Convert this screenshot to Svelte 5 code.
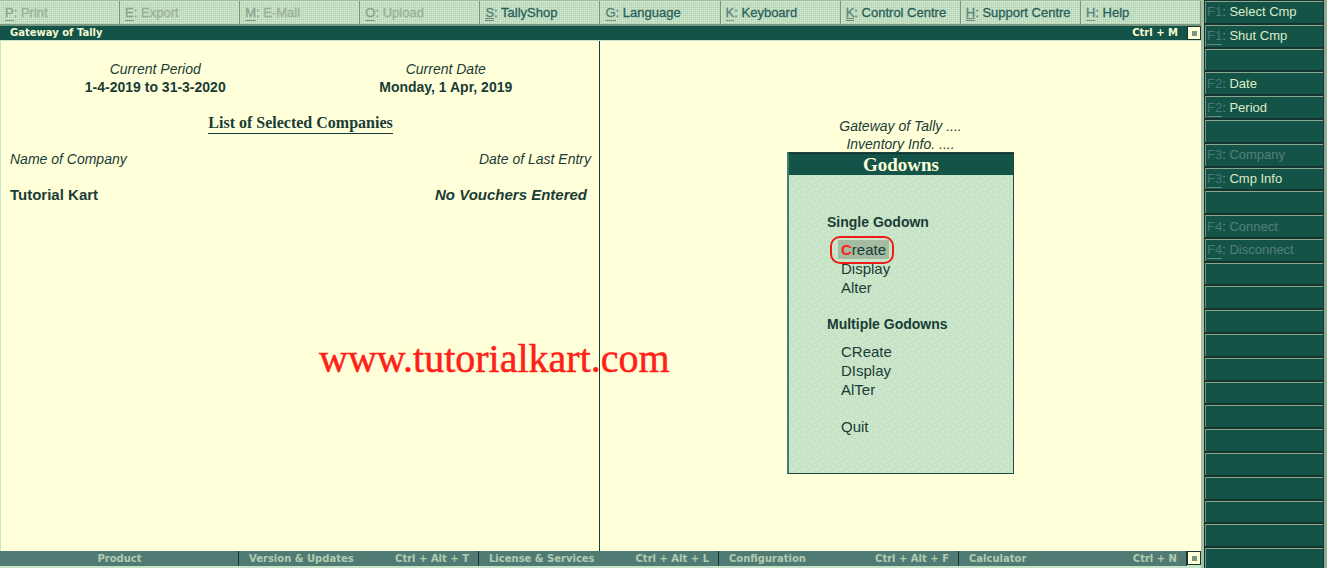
<script>
  const tools = [
    { key: 'P', label: 'Print', off: true },
    { key: 'E', label: 'Export', off: true },
    { key: 'M', label: 'E-Mail', off: true },
    { key: 'O', label: 'Upload', off: true },
    { key: 'S', label: 'TallyShop', double: true },
    { key: 'G', label: 'Language' },
    { key: 'K', label: 'Keyboard' },
    { key: 'K', label: 'Control Centre', double: true },
    { key: 'H', label: 'Support Centre', double: true },
    { key: 'H', label: 'Help' }
  ];

  const commands = [
    { key: 'F1', label: 'Select Cmp' },
    { key: 'F1', label: 'Shut Cmp', alt: true },
    null,
    { key: 'F2', label: 'Date' },
    { key: 'F2', label: 'Period', alt: true },
    null,
    { key: 'F3', label: 'Company', off: true },
    { key: 'F3', label: 'Cmp Info', alt: true },
    null,
    { key: 'F4', label: 'Connect', off: true },
    { key: 'F4', label: 'Disconnect', off: true, alt: true },
    ...Array(13).fill(null)
  ];

  const panels = [
    { label: 'Product' },
    { label: 'Version & Updates', hint: 'Ctrl + Alt + T' },
    { label: 'License & Services', hint: 'Ctrl + Alt + L' },
    { label: 'Configuration', hint: 'Ctrl + Alt + F' },
    { label: 'Calculator', hint: 'Ctrl + N' }
  ];
</script>

<div class="app">
  <div class="main">
    <nav class="toolbar">
      {#each tools as t}
        <button class="tool" class:off={t.off} disabled={t.off}>
          <span class="key" class:double={t.double}>{t.key}</span><span class="colon">:</span> {t.label}
        </button>
      {/each}
    </nav>

    <header class="titlebar">
      <span>Gateway of Tally</span>
      <span class="hint">Ctrl + M</span>
      <button class="box" aria-label="Restore main area"></button>
    </header>

    <div class="work">
      <section class="companies">
        <div class="facts">
          <div><i>Current Period</i><b>1-4-2019 to 31-3-2020</b></div>
          <div><i>Current Date</i><b>Monday, 1 Apr, 2019</b></div>
        </div>
        <h2>List of Selected Companies</h2>
        <table>
          <thead>
            <tr><th>Name of Company</th><th>Date of Last Entry</th></tr>
          </thead>
          <tbody>
            <tr><td>Tutorial Kart</td><td><em>No Vouchers Entered</em></td></tr>
          </tbody>
        </table>
      </section>

      <section class="gateway">
        <div class="trail"><span>Gateway of Tally ....</span><span>Inventory Info. ....</span></div>
        <div class="menu">
          <h1>Godowns</h1>
          <div class="entries">
            <h3>Single Godown</h3>
            <ul>
              <li><button class="item current"><b>C</b>reate</button></li>
              <li><button class="item">Display</button></li>
              <li><button class="item">Alter</button></li>
            </ul>
            <h3>Multiple Godowns</h3>
            <ul>
              <li><button class="item">CReate</button></li>
              <li><button class="item">DIsplay</button></li>
              <li><button class="item">AlTer</button></li>
              <li class="quit"><button class="item">Quit</button></li>
            </ul>
          </div>
        </div>
      </section>
      <div class="watermark">www.tutorialkart.com</div>
    </div>

    <footer>
      {#each panels as p}
        <div class="panel" class:single={!p.hint}>
          <span>{p.label}</span>
          {#if p.hint}<span>{p.hint}</span>{/if}
        </div>
      {/each}
      <button class="box" aria-label="Restore calculator"></button>
    </footer>
  </div>

  <aside>
    <div class="commands">
      {#each commands as c}
        {#if c}
          <button class="cmd" class:off={c.off} disabled={c.off}>
            <span class="fkey" class:alt={c.alt}>{c.key}</span><span class="colon">:</span> {c.label}
          </button>
        {:else}
          <div class="cmd"></div>
        {/if}
      {/each}
    </div>
  </aside>
</div>

<style>
  :global(body) {
    margin: 0;
    background: #ffffda;
  }
  * {
    box-sizing: border-box;
  }
  button {
    margin: 0;
    padding: 0;
    border: 0;
    background: none;
    color: inherit;
    font: inherit;
    text-align: left;
    white-space: pre;
  }
  h1, h2, h3, ul {
    margin: 0;
    padding: 0;
  }
  ul {
    list-style: none;
  }

  .app {
    display: grid;
    grid-template-columns: minmax(0, 1fr) 126px;
    height: 100vh;
    overflow: hidden;
    color: #1a3c36;
    font-family: "Liberation Sans", Arial, sans-serif;
  }
  .main {
    display: flex;
    flex-direction: column;
    background: #c8e4c8;
  }

  .toolbar {
    display: grid;
    grid-template-columns: repeat(10, 1fr);
    height: 26px;
    border-top: 1px solid #a7bda5;
    border-bottom: 2px solid #78957f;
    background: conic-gradient(#b2caae 25%, #c8e4c8 0) 0 0 / 2px 2px;
  }
  .tool {
    padding-left: 5px;
    border-right: 1px solid #76957f;
    box-shadow: inset 1px 2px #c8e4c8;
    color: #2a605a;
    font-size: 13px;
    line-height: 23px;
    -webkit-text-stroke: 0.3px currentColor;
  }
  .tool.off {
    color: #9bb09a;
  }
  .key {
    display: inline-block;
    height: 20px;
    border-bottom: 1px solid #7d9a87;
    line-height: 23px;
    color: #56817a;
  }
  .key.double {
    border-bottom: 3px double #6d8c7e;
  }
  .tool .colon {
    color: #56817a;
  }
  .off .key, .off .colon {
    color: #8ba38c;
  }

  .titlebar {
    display: flex;
    align-items: center;
    height: 14px;
    padding-left: 10px;
    background: #145448;
    color: #f4f8d4;
    font: bold 10px/14px "DejaVu Sans", Verdana, sans-serif;
  }
  .hint {
    margin-left: auto;
    margin-right: 9px;
  }
  .box {
    display: grid;
    place-items: center;
    width: 14px;
    height: 14px;
    border: 1px solid #17332d;
    background: #ffffda;
  }
  .box::before {
    content: "";
    width: 5px;
    height: 5px;
    background: #78957f;
  }

  .work {
    position: relative;
    flex: 1;
    display: grid;
    grid-template-columns: 599fr 601fr;
    min-height: 0;
    border-left: 1px solid #c8e4c8;
    border-top: 1px solid #c8e4c8;
    background: #ffffda;
  }
  .companies {
    padding: 19px 8px 0 9px;
    border-right: 1px solid #173f36;
  }
  .facts {
    display: grid;
    grid-template-columns: 1fr 1fr;
    font-size: 14px;
    line-height: 18px;
    text-align: center;
  }
  .facts i, .facts b {
    display: block;
  }
  h2 {
    width: fit-content;
    margin: 17px auto 0;
    padding-bottom: 1px;
    border-bottom: 1px solid #1a3c36;
    font: bold 16px/19px "Liberation Serif", "Times New Roman", serif;
  }
  table {
    width: 100%;
    margin-top: 16px;
    border-collapse: collapse;
  }
  th, td {
    padding: 0;
    text-align: left;
    line-height: 18px;
  }
  th {
    font-size: 14px;
    font-style: italic;
    font-weight: normal;
  }
  td {
    padding-top: 18px;
    font-size: 15px;
    font-weight: bold;
  }
  th:last-child, td:last-child {
    text-align: right;
  }
  td:last-child {
    padding-right: 4px;
  }

  .gateway {
    display: flex;
    flex-direction: column;
    align-items: center;
    padding-top: 76px;
  }
  .trail {
    display: grid;
    justify-items: center;
    font-size: 14px;
    font-style: italic;
    line-height: 18px;
    text-align: center;
  }
  .menu {
    width: 227px;
    min-height: 322px;
    border: 1px solid #1a4a41;
    border-left: 2px solid #477a70;
    margin-top: -1px;
    background:
      conic-gradient(#eff6d1 25%, transparent 0) 0 0 / 2px 2px no-repeat,
      linear-gradient(#eff6d1, #eff6d1) 0 0 / 0 0,
      url("data:image/svg+xml,%3Csvg xmlns='http://www.w3.org/2000/svg' width='12' height='10'%3E%3Cpath fill='%23eff6d1' d='M1 1h1v1h-1zM7 3h1v1h-1zM3 6h1v1h-1zM10 8h1v1h-1z'/%3E%3C/svg%3E"),
      #c8e4c8;
  }
  h1 {
    border-top: 1px solid #17332d;
    background: #145448;
    color: #ffffda;
    font: bold 19px/21px "Liberation Serif", "Times New Roman", serif;
    text-align: center;
  }
  .entries {
    padding: 38px 0 36px 38px;
  }
  h3 {
    font-size: 14px;
    line-height: 18px;
  }
  ul {
    padding: 9px 0 0 11px;
  }
  li {
    height: 19px;
  }
  ul + h3 {
    margin-top: 18px;
  }
  .quit {
    margin-top: 18px;
  }
  .item {
    position: relative;
    display: block;
    padding: 0 3px;
    font-size: 15px;
    line-height: 19px;
  }
  .current {
    background: #a5bba2;
  }
  .current b {
    color: #ff2018;
  }
  .current::after {
    content: "";
    position: absolute;
    z-index: 1;
    inset: -4px -5px -5px -8px;
    border: 2px solid #ee1c14;
    border-radius: 10px;
  }
  .watermark {
    position: absolute;
    top: 294px;
    left: 26.5%;
    color: #ff2018;
    font: 40px/48px "Liberation Serif", "Times New Roman", serif;
    -webkit-text-stroke: 0.5px currentColor;
  }

  footer {
    display: grid;
    grid-template-columns: 239fr 240fr 240fr 240fr 228fr 14px;
    height: 17px;
    padding-bottom: 2px;
    color: #b2cbb0;
    font: bold 10px/15px "DejaVu Sans", Verdana, sans-serif;
    white-space: nowrap;
  }
  .panel {
    display: flex;
    justify-content: space-between;
    padding: 0 9px 0 10px;
    border-right: 1px solid #17332d;
    background: conic-gradient(#5d8578 25%, #4c7773 0) 0 0 / 6px 4px;
    background: #507b75;
  }
  .single {
    justify-content: center;
  }

  aside {
    overflow: hidden;
    padding: 0 1px;
    border-right: 3px solid #8fab93;
    border-left: 3px solid #a7bda5;
    background: #17332d;
  }
  .commands {
    display: grid;
    grid-template-rows: repeat(24, 1fr);
    height: calc(100vh + 2px);
    padding-top: 1px;
    row-gap: 2px;
  }
  .cmd {
    border-top: 1px solid #8ba78e;
    border-left: 1px solid #78957f;
    padding-left: 1px;
    background: #145448;
    color: #dcebc5;
    font-size: 13px;
    line-height: 20px;
  }
  .cmd.off {
    color: #557f78;
  }
  .fkey {
    display: inline-block;
    height: 19px;
    color: #4c7773;
  }
  .fkey.alt {
    border-bottom: 1px solid #6a8c80;
  }
  .cmd .colon {
    color: #6d9386;
  }
</style>
